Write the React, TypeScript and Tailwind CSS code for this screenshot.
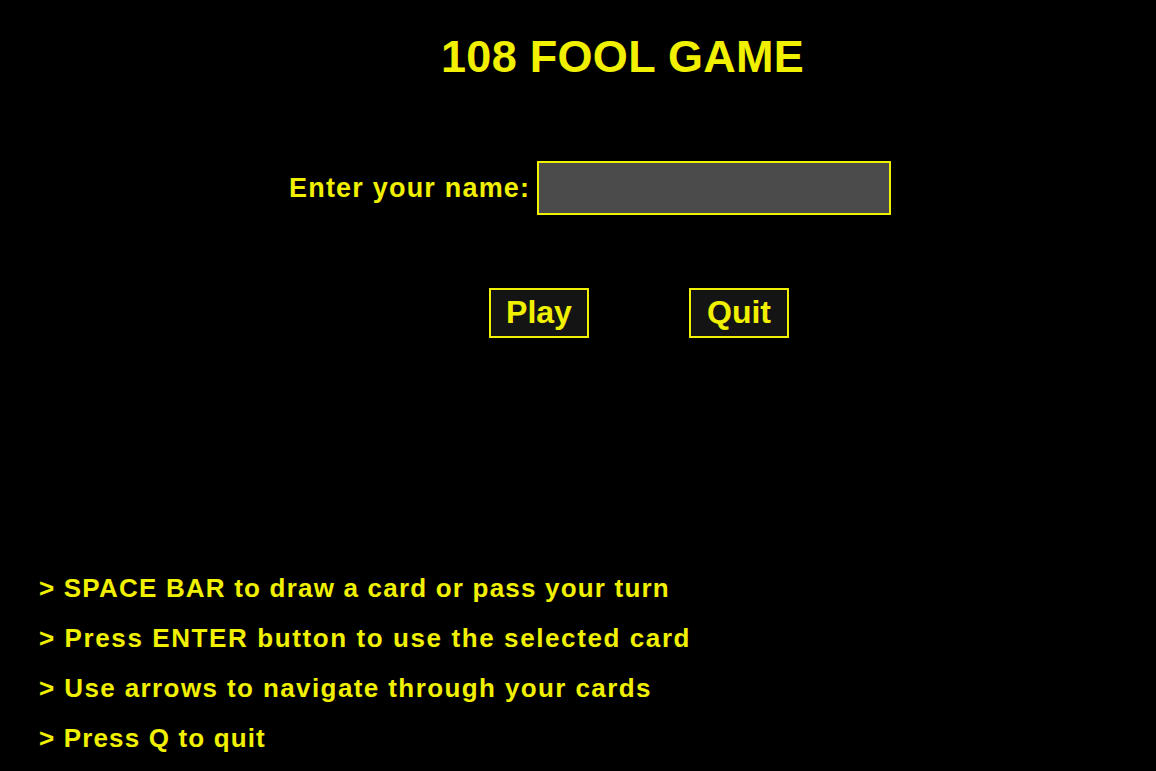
export default function App() {
  const hints = [
    { text: "> SPACE BAR to draw a card or pass your turn", cls: "tracking-[1.2px]" },
    { text: "> Press ENTER button to use the selected card", cls: "tracking-[1.6px]" },
    { text: "> Use arrows to navigate through your cards", cls: "tracking-[1.4px]" },
    { text: "> Press Q to quit", cls: "tracking-[1.15px]" },
  ];

  return (
    <div className="w-[1156px] h-[771px] bg-black text-[#f0f000] font-bold font-['Liberation_Sans',Arial,sans-serif] flex flex-col">
      <h1 className="pt-[31px] pl-[441px] text-[45px] leading-[52px] tracking-[0.3px]">108 FOOL GAME</h1>

      <div className="mt-[78px] pl-[289px] flex items-center gap-[7px]">
        <label htmlFor="name" className="text-[27px] leading-[32px] tracking-[1.2px]">
          Enter your name:
        </label>
        <input
          id="name"
          type="text"
          className="w-[354px] h-[54px] bg-[#4b4b4b] border-2 border-[#f0f000] outline-none px-2 text-[24px] text-[#f0f000]"
        />
      </div>

      <div className="mt-[73px] pl-[489px] flex gap-[100px]">
        <button className="w-[100px] h-[50px] bg-[#141414] border-2 border-[#f0f000] flex items-center justify-center pb-[3px] text-[32px] leading-[46px]">
          Play
        </button>
        <button className="w-[100px] h-[50px] bg-[#141414] border-2 border-[#f0f000] flex items-center justify-center pb-[3px] text-[32px] leading-[46px]">
          Quit
        </button>
      </div>

      <ul className="mt-auto mb-[8px] pl-[39px] text-[26px] leading-[50px]">
        {hints.map((h) => (
          <li key={h.text} className={h.cls}>
            {h.text}
          </li>
        ))}
      </ul>
    </div>
  );
}
